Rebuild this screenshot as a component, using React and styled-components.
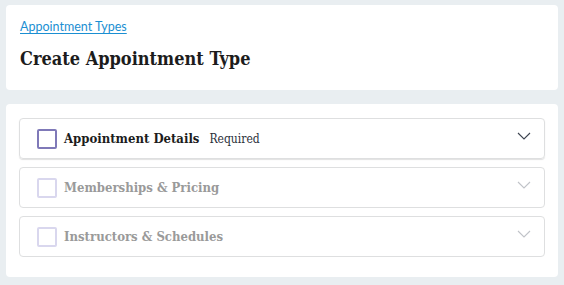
import React from "react";
import styled, { createGlobalStyle } from "styled-components";

const Global = createGlobalStyle`
  html, body { margin: 0; padding: 0; background: #e9eef1; }
  body { font-family: "DejaVu Serif", serif; }
`;

const Page = styled.div`
  display: flex;
  flex-direction: column;
  gap: 14px;
  padding: 5px 6px 8px 6px;
`;

const Card = styled.section`
  background: #fff;
  border-radius: 4px;
  padding: ${(p) => p.$pad};
`;

const Crumb = styled.a`
  display: block;
  width: fit-content;
  font-family: Lato, sans-serif;
  font-size: 12.5px;
  line-height: 16px;
  color: #1b8fd2;
  text-decoration: underline;
  text-underline-offset: 2px;
`;

const Title = styled.h1`
  margin: 12px 0 0;
  font-family: "DejaVu Serif Condensed", "DejaVu Serif", serif;
  font-weight: 700;
  font-size: 18px;
  line-height: 24px;
  color: #1c1c1c;
`;

const List = styled.div`
  display: flex;
  flex-direction: column;
  gap: 8px;
`;

const Item = styled.div`
  display: flex;
  align-items: center;
  height: 41px;
  box-sizing: border-box;
  border: 1px solid #dedfe0;
  border-radius: 4px;
  padding: 0 13px 0 17px;
  box-shadow: ${(p) => (p.$active ? "0 1px 1px rgba(0,0,0,0.12)" : "none")};
`;

const Box = styled.span`
  width: 20px;
  height: 20px;
  box-sizing: border-box;
  border: 2px solid ${(p) => (p.$active ? "#7f79b8" : "#d9d7ee")};
  border-radius: 2px;
  flex: none;
`;

const Label = styled.span`
  margin-left: 7px;
  font-family: "DejaVu Serif Condensed", "DejaVu Serif", serif;
  font-weight: 700;
  font-size: 13px;
  color: ${(p) => (p.$active ? "#1c1c1c" : "#9a9a9a")};
`;

const Note = styled.span`
  margin-left: 10px;
  font-family: "DejaVu Serif Condensed", "DejaVu Serif", serif;
  font-size: 12px;
  color: #2b2f3a;
`;

const Chevron = styled.svg`
  margin-left: auto;
  flex: none;
  margin-top: -6px;
`;

const items = [
  { label: "Appointment Details", note: "Required", active: true },
  { label: "Memberships & Pricing" },
  { label: "Instructors & Schedules" },
];

export default function App() {
  return (
    <>
      <Global />
      <Page>
        <Card $pad="14px 14px 19px 14px">
          <Crumb>Appointment Types</Crumb>
          <Title>Create Appointment Type</Title>
        </Card>
        <Card $pad="14px 13px 20px 13px">
          <List>
            {items.map((it) => (
              <Item key={it.label} $active={it.active}>
                <Box $active={it.active} />
                <Label $active={it.active}>{it.label}</Label>
                {it.note && <Note>{it.note}</Note>}
                <Chevron width="14" height="8" viewBox="0 0 14 8">
                  <path
                    d="M1 1 L7 7 L13 1"
                    fill="none"
                    stroke={it.active ? "#3d4450" : "#c0c3c8"}
                    strokeWidth="1.1"
                  />
                </Chevron>
              </Item>
            ))}
          </List>
        </Card>
      </Page>
    </>
  );
}
